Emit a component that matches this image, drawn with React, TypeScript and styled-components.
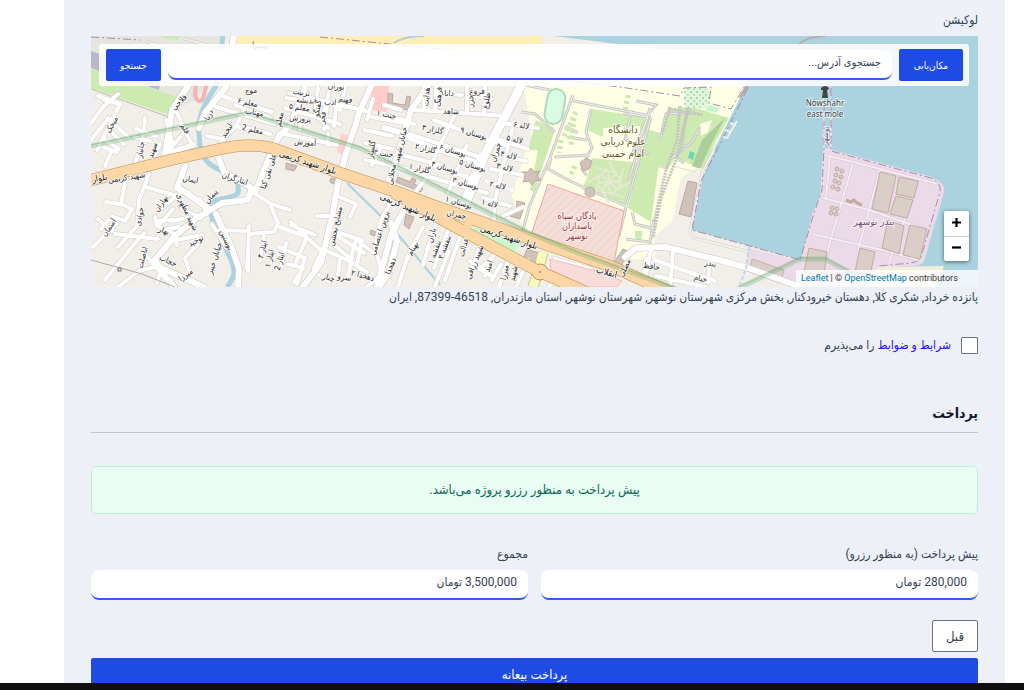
import React from "react";
import styled, { createGlobalStyle } from "styled-components";

const persian = `Roboto, "DejaVu Sans Condensed", "DejaVu Sans", sans-serif`;

const GlobalStyle = createGlobalStyle`
  *, *::before, *::after { box-sizing: border-box; }
  body {
    margin: 0;
    background: #fff;
    color: #334155;
    font-family: ${persian};
    font-size: 12px;
    line-height: 20px;
    overflow-x: hidden;
  }
  input, button { font-family: inherit; }
`;

const Panel = styled.main`
  margin: 0 19px 0 64px;
  padding: 10px 27px 0;
  min-height: 100vh;
  background: #edf0f6;
`;

const Label = styled.label`
  display: block;
  font-size: 12px;
  line-height: 20px;
  margin-bottom: 6px;
`;

const MapFrame = styled.div`
  position: relative;
  height: 251px;
  overflow: hidden;
  background: #f2efe9;
`;

const MapSvg = styled.svg`
  display: block;
  width: 100%;
  height: 100%;
`;

const SearchBar = styled.form`
  position: absolute;
  top: 8px;
  left: 8px;
  right: 9px;
  display: flex;
  align-items: center;
  gap: 7px;
  padding: 5px 6px 5px 7px;
  border-radius: 3px;
  background: rgba(255, 255, 255, 0.86);
`;

const MapButton = styled.button<{ $width: number }>`
  flex: none;
  width: ${(p) => p.$width}px;
  height: 32px;
  padding: 0;
  border: 0;
  border-radius: 2px;
  background: #1f4be5;
  color: #fff;
  font-size: 10px;
`;

const TextInput = styled.input`
  display: block;
  width: 100%;
  min-width: 0;
  height: 30px;
  padding: 0 11px 4px;
  border: 0;
  border-bottom: 2px solid #3359fb;
  border-radius: 8px;
  background: #fff;
  color: #334155;
  font-size: 12px;
  &::placeholder { color: #334155; opacity: 1; font-size: 11px; }
`;

const ZoomControl = styled.div`
  position: absolute;
  right: 9px;
  bottom: 26px;
  width: 25px;
  border-radius: 2px;
  background: #fff;
  box-shadow: 0 1px 4px rgba(0, 0, 0, 0.55);
`;

const ZoomButton = styled.button`
  display: grid;
  place-items: center;
  width: 25px;
  height: 25px;
  padding: 0 0 3px;
  border: 0;
  background: none;
  & + & { border-top: 1px solid #ccc; }
`;

const Attribution = styled.div`
  position: absolute;
  right: 0;
  bottom: 0;
  width: 182px;
  height: 17px;
  padding-left: 5px;
  background: rgba(255, 255, 255, 0.8);
  color: #333;
  font: 9px/16px Roboto, sans-serif;
  white-space: nowrap;
  a { color: #0078a8; text-decoration: none; }
`;

const Address = styled.p`
  margin: 0;
  font-size: 12px;
  line-height: 20px;
`;

const Terms = styled.div`
  display: flex;
  align-items: center;
  gap: 10px;
  margin-top: 28px;
  height: 20px;
  a { color: #1a10f0; text-decoration: none; }
`;

const Checkbox = styled.input`
  appearance: none;
  width: 17px;
  height: 17px;
  margin: 0;
  border: 1px solid #6b7280;
  border-radius: 1px;
  background: #fff;
  &:checked { background: #1f4be5; }
`;

const Heading = styled.h2`
  margin: 46px 0 0;
  padding-bottom: 7px;
  border-bottom: 1px solid #c1c5cd;
  color: #0f172a;
  font-size: 14px;
  line-height: 24px;
`;

const Notice = styled.p`
  margin: 33px 0 0;
  padding: 13px;
  border: 1px solid #bbf0da;
  border-radius: 5px;
  background: #eafdf5;
  color: #0b6b50;
  font-size: 13px;
  text-align: center;
`;

const Fields = styled.div`
  display: grid;
  grid-template-columns: 1fr 1fr;
  gap: 13px;
  margin-top: 30px;
`;

const PreviousButton = styled.button`
  display: block;
  width: 46px;
  height: 32px;
  margin: 20px 0 6px;
  padding: 0;
  border: 1px solid #6b7280;
  border-radius: 2px;
  background: #fff;
  color: #334155;
  font-size: 13px;
`;

const SubmitButton = styled.button`
  display: block;
  width: 100%;
  height: 32px;
  padding: 0;
  border: 0;
  border-radius: 2px;
  background: #1f4be5;
  color: #fff;
  font-size: 13px;
  font-weight: 500;
`;

const BottomBar = styled.div`
  position: fixed;
  left: 0;
  right: 0;
  bottom: 0;
  height: 7px;
  background: #0f0f10;
`;

/* Residential streets, grouped by width. */
const lanes = [
  "M91 123L103 107 118 94M91 140L108 119", "M98 96L120 104 112 120 97 150M120 104L104 100", "M108 118L128 137M112 133L124 144M105 140L119 149M103 147L117 152M112 150L105 166",
  "M145 118L144 132 139 152 134 166M136 129L156 136M134 137L150 141", "M160 144L150 165", "M166 120L172 141 167 156",
  "M175 108L187 135 192 144", "M184 133L169 150 166 158", "M243 112L236 126 225 137 220 149M236 126L247 130M207 136L222 139",
  "M219 95L246 104 272 112M216 107L275 124", "M235 105L270 118M243 127L270 134", "M285 108L340 124M289 93L366 111", "M318 88L315 112 328 128M330 88L322 120M345 87L340 110",
  "M284 134L337 145M328 145L328 134M300 120L300 130", "M286 98L355 108M327 106L324 129M336 109L334 126",
  "M373 99L367 120M364 130L392 136M371 117L404 123M365 143L392 149M380 150L372 165M365 160L408 169",
  "M390 116L414 124M383 128L405 135M384 105L401 110M411 110L409 122 390 116",
  "M415 110L507 116M424 86L424 109M436 86L435 110M467 86L467 112M485 86L484 113M439 93L462 95M475 96L491 99",
  "M384 127L415 136 480 157M434 120L492 141 505 145M405 137L475 162M399 154L440 165M394 166L440 180 487 193",
  "M455 114L437 151 425 180 412 196M467 145L448 193M480 155L463 200M433 165L470 178M438 150L478 163",
  "M497 139L528 149M502 123L538 128M496 155L526 161M491 169L522 175M486 181L512 190M483 198L510 206",
  "M514 122L495 200 494 220M523 207L503 216", "M101 229L112 216 125 221 132 209 121 204 128 168M106 202L120 204M93 247L118 222M98 219L112 231",
  "M149 174L139 200 137 226 118 247M115 234L158 239M155 217L157 226 174 234 177 245M158 221L172 220",
  "M146 187L177 196 182 208M162 208L179 194M173 209L159 225M171 221L187 218", "M144 233L131 248 105 280",
  "M200 199L207 214M182 209L201 218M212 224L226 247M199 243L185 258 189 270M176 240L202 235",
  "M256 194L271 204 290 210M271 207L278 223 274 232 249 234 247 269M220 230L246 231M264 236L260 261M249 226L248 271",
  "M277 226L307 237 296 262M291 222L306 236M291 225L315 235M306 237L322 251 314 268M279 247L305 258M286 243L281 267M305 258L297 284",
  "M288 264L303 268 294 282M335 195L356 204 350 217M317 216L335 216M333 231L362 240 357 265M336 235L364 253M334 245L351 259",
  "M322 249L345 259 367 272M340 259L338 275M352 257L348 276M319 275L330 282M356 240L350 260",
  "M118 287L139 271 155 267 146 255M161 269L157 283M163 230L179 227", "M393 198L381 220 375 247 382 274 367 287M355 239L373 252",
  "M423 227L407 258 398 287M438 219L427 250M449 228L434 268M462 231L445 280M483 237L469 276M498 244L485 276M511 253L499 287M528 260L516 287M470 261L487 271",
  "M416 240L407 259M429 244L423 265M449 251L435 286M494 255L480 269 491 276M501 264L492 280",
  "M559 260L562 287M555 259L590 269 612 287M579 265L603 276M563 269L549 287",
  "M646 259L642 287M651 249L646 275M673 252L670 287M655 260L680 269 715 281M710 258L708 282M656 276L706 287",
];

const farLanes = "M104 56L158 70M128 46L147 62 180 70M147 42L210 57M185 39L215 47";

const streets = [
  "M305 88L290 126 279 136 270 155 255 193", "M371 86L359 113 355 127 347 150 338 183 332 217 321 263 303 287",
  "M204 287L161 268 154 261 175 236 197 218 222 203 248 200 252 188 224 172 217 154",
  "M216 214L231 246 239 269 238 287", "M210 210L187 193 177 188 185 166", "M428 86L411 110 399 151 389 180",
  "M391 223L397 241 389 273 379 287", "M404 210L391 235 377 287",
  "M625 257L636 248 665 247 719 260 748 268 801 287", "M188 86L172 110 165 155", "M157 267L174 287",
  "M199 128L205 113 226 87 234 36", "M169 153L193 145",
];

const avenue = "M522 84L485 154 464 208";

const campusPaths = [
  "M573 95L550 158 529 207 519 246", "M569 100L651 116M650 112L656 105 636 101", "M591 109L586 132 592 148 587 157",
  "M551 158L548 169 570 181 628 207", "M587 157L582 169 587 176", "M632 110L625 139 650 155M623 113L648 117 631 157",
  "M651 117L626 207 619 236M650 108L628 183", "M554 157L590 155M567 137L587 140M565 126L578 133",
  "M632 212L635 224 655 229M626 239L650 242 654 219", "M525 85L560 92M521 112L535 114 555 132", "M695 112L666 114 660 141",
  "M700 127L692 142 673 157M672 154L684 163",
];

type Place = [number, number, number, string];
const streetNames: Place[] = [
  [260, 48, 5, "سیترا"], [251, 93, 0, "موج"], [181, 104, -45, "فلاحی"], [247, 105, 12, "معلم ۶"], [299, 110, 8, "معلم ۵"],
  [254, 115, 10, "مهتاب"], [252, 132, 12, "معلم 2"], [301, 95, 8, "تربیت"], [306, 103, 5, "اندیشه"],
  [330, 105, 5, "ادب"], [345, 102, 8, "فهیم"], [305, 145, 5, "آموزش"], [300, 121, 5, "پرورش"], [320, 109, -80, "گفتگو"], [282, 120, -78, "معلم"],
  [325, 118, -80, "فجر"], [336, 89, 5, "نوران"],
  [211, 116, -65, "دریا"], [114, 126, -62, "میخک"], [183, 130, 60, "قلم"], [229, 132, -58, "لبخند"], [143, 150, -80, "جانباز"],
  [155, 151, -72, "سهند"], [386, 117, 12, "جنت ۱"], [383, 156, 8, "جنت ۳"], [374, 150, -80, "گلسار"], [271, 172, -72, "علی نقی کیا"],
  [127, 180, -9, "شهید کریمی"], [234, 181, 18, "ایثارگران"], [213, 198, -50, "پیمان"], [190, 182, 10, "ایمان"],
  [163, 205, -55, "بهاران"], [185, 213, 65, "شهید مطهری"], [142, 217, -80, "جوادی"], [111, 229, -55, "آسمان"],
  [163, 233, 20, "بهار"], [197, 243, -28, "توحید"], [224, 241, 65, "بوستین"], [265, 250, -75, "ایثار ۳"],
  [272, 259, -75, "ایثار ۱"], [282, 262, -75, "ایثار 2"], [217, 259, -72, "خیابان خیبر"], [145, 258, -75, "اباصلت"],
  [167, 263, 25, "حجاب"], [187, 277, -35, "میرزا"], [338, 227, -78, "مشایخ بخشی"], [382, 234, -72, "پروین اعتصامی"],
  [393, 267, -68, "دهخدا"], [362, 278, 15, "دهخدا ۲"], [344, 280, 10, "سرو"], [328, 280, 15, "چنار"],
  [429, 97, -86, "هدایت"], [441, 97, -85, "فرهنگ"], [449, 96, 0, "دانا"], [477, 94, 0, "فروغ"], [473, 101, -85, "خزر"],
  [489, 101, -80, "طلوع"], [451, 114, 3, "شاهد"], [521, 128, 8, "لاله ۶"], [514, 142, 14, "لاله ۵"], [508, 158, 14, "لاله ۴"],
  [504, 170, 14, "لاله ۳"], [497, 188, 14, "لاله ۲"], [489, 206, 14, "لاله ۱"], [432, 132, 12, "گلزار ۳"], [425, 151, 14, "گلزار ۲"],
  [419, 171, 14, "گلزار ۱"], [473, 136, 17, "بوستان ۹"], [452, 153, 17, "بوستان ۶"], [472, 168, 17, "بوستان ۵"],
  [444, 170, 17, "بوستان ۴"], [465, 186, 17, "بوستان ۳"], [458, 205, 17, "بوستان ۱"], [498, 153, -72, "چمران"],
  [456, 217, 12, "چمران"], [403, 145, -76, "خیابان شهید"], [394, 175, -80, "محلاتی"], [434, 236, -75, "باران"],
  [437, 253, -70, "بنفشه ۱"], [447, 248, -70, "بنفشه ۲"], [466, 248, -75, "عدالت"], [477, 263, -68, "شهید رزاقی"],
  [491, 267, -70, "امید"], [507, 273, -78, "میرزا"], [516, 274, -78, "شهید"], [415, 250, -60, "بهنام"],
  [627, 269, -65, "مصلی"], [651, 269, 8, "حافظ"], [710, 266, 10, "بندر"], [700, 281, 12, "خیام"],
];

const boulevardNames: Place[] = [
  [100, 181, -12, "بلوار"], [307, 165, 18, "بلوار شهید کریمی"], [407, 210, 23, "بلوار شهید کریمی"],
  [508, 240, 18, "بلوار شهید کریمی"], [606, 275, 15, "انقلاب"],
];

const warehouses = [
  "880 172 896 176 888 213 872 209", "899 177 918 181 914 198 896 194", "896 196 913 200 907 218 890 214",
  "888 220 904 226 899 254 882 248", "910 225 927 229 920 259 903 255", "860 248 875 252 870 275 855 272",
  "809 248 827 252 824 275 804 272",
];
const tanks = [
  [837, 169], [842, 171], [836, 175], [841, 177], [835, 181], [839, 183], [833, 187], [838, 189],
  [832, 208], [837, 209], [831, 213], [836, 214],
];
const starRays = [0, 45, 90, 135, 180, 225, 270, 315];

function MapLabels({ places, size, color }: { places: Place[]; size: number; color: string }) {
  return (
    <g fontFamily="DejaVu Sans Condensed, DejaVu Sans, sans-serif" fontSize={size} fill={color} stroke="#fff" strokeOpacity="0.7" strokeWidth="2" strokeLinejoin="round" paintOrder="stroke" textAnchor="middle">
      {places.map(([x, y, angle, name], i) => (
        <text key={i} transform={`translate(${x} ${y}) rotate(${angle})`}>{name}</text>
      ))}
    </g>
  );
}

function TownMap() {
  return (
    <MapSvg viewBox="91 36 887 251" preserveAspectRatio="xMidYMid slice" role="img" aria-label="نقشه نوشهر">
      <defs>
        <pattern id="hatch" width="6" height="6" patternUnits="userSpaceOnUse" patternTransform="rotate(45)">
          <path d="M0 0V6" stroke="#eec4bd" strokeWidth="2" />
        </pattern>
        <pattern id="scrub" width="6" height="6" patternUnits="userSpaceOnUse">
          <circle cx="1" cy="2" r="1" fill="#8fcaa6" /><circle cx="4" cy="5" r="1" fill="#a5d8b8" />
        </pattern>
      </defs>
      <rect x="91" y="36" width="887" height="251" fill="#f2efe9" />

      {/* ground cover */}
      <path d="M91 36H223L205 86 195 100 168 114 91 88Z" fill="#e7e5e0" />
      <path d="M91 51L106 56 161 80 159 90 91 68Z" fill="#b9b6cd" />
      <path d="M91 68L180 98 169 115 91 88Z" fill="#cdebb0" />
      <path d="M161 36H181L178 40 163 38Z" fill="#cdebb0" />
      <path d="M91 89L169 117" fill="none" stroke="#bdbab5" />
      <path d="M237 36H543L540 51 430 49 236 44Z" fill="#ffefb5" />
      <path d="M373 86H389L387 112 369 110Z" fill="#ffccca" />
      <path d="M341 133L351 136 348 157 337 152Z" fill="#ffd0cc" />
      <path d="M196 84C194 96 196 101 200 101S204 92 207 84" fill="none" stroke="#f3b3b8" strokeWidth="4" />
      <path d="M524 85H746L731 118 719 139 711 146 696 184 682 186 672 222 655 262 627 258 528 236 521 207 512 195 532 138Z" fill="#ffffe5" />
      <path d="M536 120L555 130 534 192 519 184Z" fill="#cdebb0" />
      <path d="M592 109L650 118 646 134 626 142 605 138 587 130Z" fill="#d0ecb5" />
      <path d="M603 128L640 126 640 156 603 156Z" fill="#ffffe5" />
      <path d="M647 129L663 134 651 222 628 208Z" fill="#cdebb0" />
      <path d="M592 158L640 163 627 207 582 189 588 176Z" fill="#cdebb0" />
      <path d="M668 108L692 107 729 118 715 142 704 170 692 165 676 157 667 170 655 166Z" fill="#cdebb0" />
      <path d="M725 118L712 142 700 169 692 166 702 140Z" fill="#aacf9b" />
      <rect x="684" y="87" width="25" height="21" rx="7" fill="#e0f6dd" />
      <rect x="684" y="87" width="25" height="21" rx="7" fill="url(#scrub)" />
      <path d="M709 105L720 108 716 113 705 110Z" fill="#c5f4cd" />
      <path d="M700 124L712 120 708 132 701 136Z" fill="#fffde5" />
      <path d="M690 151L695 153 693 160 688 158Z" fill="#70d6b3" />
      <path d="M635 231L643 231 641 240 635 238Z" fill="#cdebb0" />
      <path d="M512 195L526 150 538 150 528 200 525 235Z" fill="#ffffe5" />
      <path d="M681 178L696 168 703 168 690 236 655 258 655 235 672 222Z" fill="#f2efe9" />
      <path d="M672 166L696 172M650 222L651 245" stroke="#ddd" />

      {/* sea and harbour */}
      <path d="M553 36H978V287H735L800 260 692 230 700 184 716 146 746 86 752 55 650 48Z" fill="#aad3df" />
      <path d="M680 235L749 248 800 261 790 287H660Z" fill="#f2efe9" />
      <path d="M714 150L703 170 690 232 694 238 750 252" fill="none" stroke="#d0ccc9" strokeWidth="3" />
      <path d="M714 150L703 170 690 232 694 238 750 252" fill="none" stroke="#f4f1ed" strokeWidth="2" />
      <path d="M749 248L800 261 794 287 745 271Z" fill="#ebdbe8" />
      <path d="M752 259L784 270 780 283 750 272Z" fill="#d9cec8" stroke="#c3b0a8" />
      <path d="M823 86Q825 82 831 87L832 150 929 176Q946 182 944 192L925 258Q923 266 912 266L877 268 870 287H788L801 260 812 214 820 196 823 150Z" fill="#ebdbe8" />
      <path d="M824 88Q828 83 830 88V148H825Z" fill="#aad3df" />
      <path d="M878 267L944 266 936 287H865Z" fill="#f3edda" />
      <g fill="none" stroke="#a58cad" strokeWidth="1" strokeDasharray="8 3 2 3">
        <path d="M824 89V148L822 190 814 213 800 260 692 230 701 181 722 140 750 84M831 88V151L931 178Q942 183 940 192L922 254Q920 262 911 263L878 266" />
        <path d="M561 80L620 87 680 96 684 88 711 87 709 103 731 109 744 87M91 37L140 40M320 37L450 50" />
      </g>
      <g fill="none" stroke="#d2c4cf" strokeWidth="3">
        <path d="M825 155L857 163 938 184M853 164L832 235 821 275M823 198L869 210 924 229M812 234L891 252 918 260M880 170L858 250M918 181L901 229 889 262M830 155L826 198" />
      </g>
      <g fill="none" stroke="#f6edf4" strokeWidth="2">
        <path d="M825 155L857 163 938 184M853 164L832 235 821 275M823 198L869 210 924 229M812 234L891 252 918 260M880 170L858 250M918 181L901 229 889 262M830 155L826 198" />
      </g>
      <g fill="#d9cfc8" stroke="#c3aaa0">
        {warehouses.map((points) => <polygon key={points} points={points} />)}
        {tanks.map(([x, y]) => <circle key={`${x}-${y}`} cx={x} cy={y} r="2" />)}
        <path d="M846 200L851 202 854 200 857 203 862 205" fill="none" strokeWidth="3" />
      </g>
      <path d="M737 121L727 138 723 137M731 132L725 130M735 125L730 123" fill="none" stroke="#f3eeea" strokeWidth="2" />
      <path d="M746 86L740 98 748 87M797 47Q803 37 825 36" fill="none" stroke="#b9a9ad" strokeWidth="2" />

      {/* university grounds */}
      <g fill="none" stroke="#c8c8c5" strokeWidth="3">{campusPaths.map((d) => <path key={d} d={d} />)}</g>
      <g fill="none" stroke="#efefeb" strokeWidth="1">{campusPaths.map((d) => <path key={d} d={d} />)}</g>
      <rect x="546" y="89" width="18" height="35" rx="9" fill="#dcfbe4" stroke="#a9dcbc" strokeWidth="2" transform="rotate(10 555 106)" />
      <g fill="none" stroke="#c4c4c1" strokeWidth="3" strokeDasharray="2 1">
        <path d="M670 107L662 134M680 106L677 140 666 170 654 222M690 108L683 128 677 157 661 198 653 238M668 109L703 115M687 108L681 153" />
      </g>
      <g fill="none" stroke="#c9e9af" strokeWidth="5" strokeDasharray="3 3">
        <path d="M628 95L625 110M576 112L563 138M574 118L571 145M561 140L559 153M575 166L570 176" />
      </g>
      <g stroke="#e6e8d4" strokeWidth="2" fill="none">
        {starRays.map((angle) => <path key={angle} d="M609 182L616 174 609 161M616 174L622 180" transform={`rotate(${angle} 609 182)`} />)}
      </g>
      <g fill="#d0c2bb" stroke="#bba9a0">
        <path d="M580 163L586 158 592 161 589 169 583 171Z" /><circle cx="590" cy="192" r="5" />
        <path d="M531 168L534 172 540 171 537 176 541 180 535 181 532 185 529 181 523 182 525 177 522 172 528 172Z" />
        <path d="M688 181L697 183 691 217 679 214Z" />
        <path d="M388 93L388 106 408 110 411 97 407 96 405 105 392 103 393 94Z" />
        <path d="M398 177L410 182 412 178 416 180 414 184 423 188 421 192 396 182Z" />
        <path d="M517 201L525 203 520 219 510 216 511 212 516 213Z" /><path d="M527 249L539 253 536 263 523 260Z" />
        <path d="M623 249L629 252 621 266 614 263Z" /><path d="M406 214L414 217 409 229 404 225Z" />
        <path d="M286 163L297 166 294 171 286 169ZM331 178L339 180 336 185 330 182ZM371 230L376 232 374 236 370 234Z" />
      </g>

      {/* river and streams */}
      <path d="M223 36L216 86C200 110 198 120 199 134C200 160 208 165 224 172C242 182 238 190 238 193C232 201 211 196 211 206C210 222 218 232 226 249C238 272 235 277 227 287" fill="none" stroke="#aad3df" strokeWidth="5" />
      <path d="M347 183L393 228 400 237 440 285M394 43Q404 36 424 36" fill="none" stroke="#aad3df" strokeWidth="2" />

      {/* streets */}
      <g fill="none" strokeLinecap="round" strokeLinejoin="round">
        <path d={farLanes} stroke="#c9c7c3" strokeWidth="3" />
        <path d={farLanes} stroke="#efedea" strokeWidth="2" />
        <g stroke="#cfccc8" strokeWidth="5">{lanes.map((d) => <path key={d} d={d} />)}</g>
        <g stroke="#c7c4c0" strokeWidth="7">{streets.map((d) => <path key={d} d={d} />)}</g>
        <path d={avenue} stroke="#c7c4c0" strokeWidth="10" />
        <g stroke="#fff" strokeWidth="4">{lanes.map((d) => <path key={d} d={d} />)}</g>
        <g stroke="#fff" strokeWidth="6">{streets.map((d) => <path key={d} d={d} />)}</g>
        <path d={avenue} stroke="#fff" strokeWidth="9" />
      </g>
      <path d="M91 260L142 274 175 287" fill="none" stroke="#aaa" />
      <rect x="118" y="268" width="3" height="3" fill="#ddd" stroke="#777" />

      {/* barracks */}
      <path d="M551 270L550 259 600 272 622 281 617 287H588Z" fill="#f8dcd9" stroke="#f5b8b6" />
      <path d="M548 184L624 211 613 267 530 238Z" fill="#f4ded8" />
      <path d="M548 184L624 211 613 267 530 238Z" fill="url(#hatch)" fillOpacity="0.5" stroke="#f2a3a1" />

      {/* boulevard */}
      <g fill="none" strokeLinejoin="round">
        <path d="M543 252L538 272 533 287" stroke="#c9c788" strokeWidth="11" />
        <path d="M543 252L538 272 533 287" stroke="#f7fabf" strokeWidth="9" />
        <path d="M463 222L519 242 514 256 472 236Z" fill="#c8facc" />
        <g stroke="#be8d4a" strokeWidth="12">
          <path d="M88 181L170 160 220 149Q255 141 280 151L340 173 394 191 440 208 475 220 545 244 610 266 670 292" />
          <path d="M394 193L465 232 538 271 590 294" />
        </g>
        <circle cx="540" cy="272" r="8" fill="#fcd6a4" stroke="#be8d4a" />
        <g stroke="#fcd6a4" strokeWidth="11">
          <path d="M88 181L170 160 220 149Q255 141 280 151L340 173 394 191 440 208 475 220 545 244 610 266 670 292" />
          <path d="M394 193L465 232 538 271 590 294" />
        </g>
        <path d="M469 222L465 232" stroke="#fcd6a4" strokeWidth="7" />
        <circle cx="540" cy="272" r="1" fill="#c68a3a" />
      </g>
      <g fill="none" stroke="#65a86c">
        <path d="M91 146L247 113 360 148 430 183 527 232 583 255 680 290M737 289L800 259H825L855 275" strokeOpacity="0.3" strokeWidth="5" />
        <path d="M91 145L247 112 360 147 430 182 527 231 583 254 680 289M737 288L800 258H825L855 274" strokeOpacity="0.45" />
      </g>
      <path d="M749 247L746 269 739 287" fill="none" stroke="#b8dce5" strokeWidth="2" strokeDasharray="4 2" />

      <MapLabels places={streetNames} size={8} color="#2b2b2b" />
      <MapLabels places={boulevardNames} size={9} color="#111" />
      <g fontFamily="DejaVu Sans Condensed, DejaVu Sans, sans-serif" fontSize="10" textAnchor="middle" stroke="#fff" strokeOpacity="0.6" strokeWidth="2" paintOrder="stroke">
        <g fill="#65571c"><text x="623" y="133">دانشگاه</text><text x="623" y="145">علوم دریایی</text><text x="623" y="157">امام خمینی</text></g>
        <g fill="#9e2a3c" fontSize="9"><text x="577" y="219">پادگان سپاه</text><text x="577" y="229">پاسداران</text><text x="577" y="239">نوشهر</text></g>
        <text x="874" y="225" fill="#744d78">بندر نوشهر</text>
        <text transform="translate(828 136) rotate(-85)" fontSize="8" fill="#805b82">نوشهر</text>
        <g fill="#444" fontSize="8" fontFamily="Noto Sans, sans-serif"><text x="825" y="106">Nowshahr</text><text x="825" y="117">east mole</text></g>
      </g>
      <path d="M821 88Q825 84 829 88L828 90H827L828 98H822L823 90H821Z" fill="#444" />
    </MapSvg>
  );
}

export default function App() {
  return (
    <>
      <GlobalStyle />
      <Panel dir="rtl" lang="fa">
        <Label htmlFor="location">لوکیشن</Label>
        <MapFrame>
          <TownMap />
          <SearchBar onSubmit={(e) => e.preventDefault()}>
            <MapButton type="button" $width={64}>مکان‌یابی</MapButton>
            <TextInput id="location" placeholder="جستجوی آدرس..." />
            <MapButton type="submit" $width={55}>جستجو</MapButton>
          </SearchBar>
          <ZoomControl>
            <ZoomButton type="button" aria-label="بزرگ‌نمایی">
              <svg width="11" height="11" viewBox="0 0 11 11"><path d="M5.500 1V10M1 5.500H10" stroke="#000" strokeWidth="2.200" /></svg>
            </ZoomButton>
            <ZoomButton type="button" aria-label="کوچک‌نمایی">
              <svg width="11" height="11" viewBox="0 0 11 11"><path d="M1 5.500H10" stroke="#000" strokeWidth="2.200" /></svg>
            </ZoomButton>
          </ZoomControl>
          <Attribution dir="ltr">
            <a href="#leaflet">Leaflet</a> | © <a href="#osm">OpenStreetMap</a> contributors
          </Attribution>
        </MapFrame>
        <Address>
          پانزده خرداد, شکری کلا, دهستان خیرودکنار, بخش مرکزی شهرستان نوشهر, شهرستان نوشهر, استان مازندران, 46518-87399, ایران
        </Address>
        <Terms>
          <Checkbox type="checkbox" id="terms" />
          <label htmlFor="terms"><a href="#terms">شرایط و ضوابط</a> را می‌پذیرم</label>
        </Terms>
        <Heading>پرداخت</Heading>
        <Notice>پیش پرداخت به منظور رزرو پروژه می‌باشد.</Notice>
        <Fields>
          <div>
            <Label htmlFor="deposit">پیش پرداخت (به منظور رزرو)</Label>
            <TextInput id="deposit" readOnly value="280,000 تومان" />
          </div>
          <div>
            <Label htmlFor="total">مجموع</Label>
            <TextInput id="total" readOnly value="3,500,000 تومان" />
          </div>
        </Fields>
        <PreviousButton type="button">قبل</PreviousButton>
        <SubmitButton type="button">پرداخت بیعانه</SubmitButton>
      </Panel>
      <BottomBar />
    </>
  );
}
